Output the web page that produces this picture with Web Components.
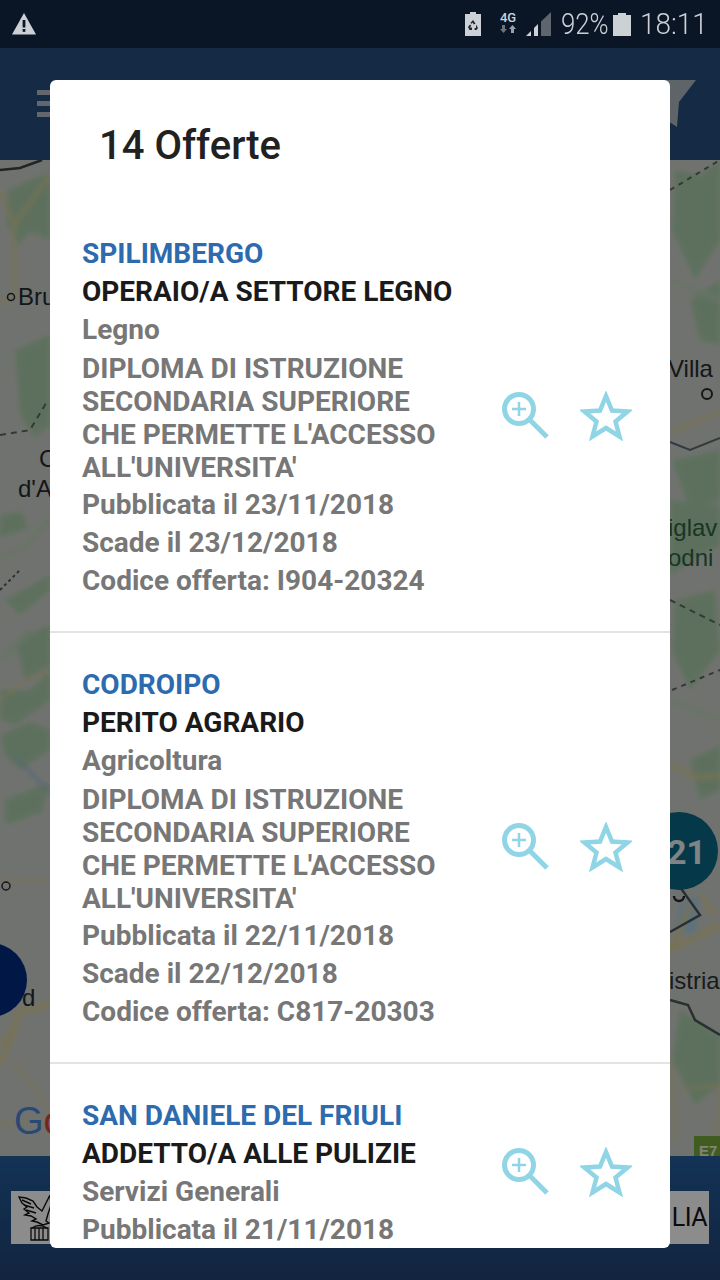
<!DOCTYPE html>
<html>
<head>
<meta charset="utf-8">
<title>Offerte</title>
<style>
    html, body { margin: 0; padding: 0; background: #12263f; }
</style>
</head>
<body>
<app-page>
    <status-bar slot="status"></status-bar>
    <app-header></app-header>
    <map-view></map-view>
    <app-footer></app-footer>
    <offer-dialog slot="dialog" heading="14 Offerte">
        <offer-row>
            <span slot="city">SPILIMBERGO</span>
            <span slot="title">OPERAIO/A SETTORE LEGNO</span>
            <span slot="sector">Legno</span>
            <span slot="education">DIPLOMA DI ISTRUZIONE SECONDARIA SUPERIORE CHE PERMETTE L'ACCESSO ALL'UNIVERSITA'</span>
            <span slot="info">Pubblicata il 23/11/2018</span>
            <span slot="info">Scade il 23/12/2018</span>
            <span slot="info">Codice offerta: I904-20324</span>
        </offer-row>
        <offer-row>
            <span slot="city">CODROIPO</span>
            <span slot="title">PERITO AGRARIO</span>
            <span slot="sector">Agricoltura</span>
            <span slot="education">DIPLOMA DI ISTRUZIONE SECONDARIA SUPERIORE CHE PERMETTE L'ACCESSO ALL'UNIVERSITA'</span>
            <span slot="info">Pubblicata il 22/11/2018</span>
            <span slot="info">Scade il 22/12/2018</span>
            <span slot="info">Codice offerta: C817-20303</span>
        </offer-row>
        <!-- the rest of this row is scrolled out of the dialog -->
        <offer-row style="padding-bottom: 107px">
            <span slot="city">SAN DANIELE DEL FRIULI</span>
            <span slot="title">ADDETTO/A ALLE PULIZIE</span>
            <span slot="sector">Servizi Generali</span>
            <span slot="info">Pubblicata il 21/11/2018</span>
        </offer-row>
    </offer-dialog>
</app-page>

<script>
class AppPage extends HTMLElement {
    connectedCallback() {
        this.attachShadow({ mode: 'open' });
        this.shadowRoot.innerHTML = `
        <style>
            :host { display: flex; flex-direction: column; width: 720px; height: 1280px; overflow: hidden; font-family: Roboto, sans-serif; }
            .main { position: relative; flex: 1; display: flex; flex-direction: column; min-height: 0; }
            .scrim { position: absolute; inset: 0; background: rgba(0, 0, 0, .45); display: flex; padding: 32px 50px; box-sizing: border-box; }
        </style>
        <slot name="status"></slot>
        <div class="main">
            <slot></slot>
            <div class="scrim"><slot name="dialog"></slot></div>
        </div>
        `;
    }
}

class StatusBar extends HTMLElement {
    connectedCallback() {
        this.attachShadow({ mode: 'open' });
        this.shadowRoot.innerHTML = `
        <style>
            :host { display: flex; align-items: center; height: 48px; padding: 0 15px 0 12px; background: #0a1626; color: #ccd1d6; font-family: Roboto, sans-serif; font-weight: 300; flex: none; box-sizing: border-box; }
            svg { display: block; flex: none; }
            .spacer { flex: 1; }
            .net { width: 20px; margin-left: 17px; font-size: 13px; line-height: 13px; font-weight: 500; text-align: center; position: relative; top: -2px; }
            .net svg { margin: 1px auto 0; }
            .signal { margin-left: 8px; }
            .pct, .clock { display: block; font-size: 30px; line-height: 48px; transform-origin: left center; white-space: nowrap; }
            .pct { width: 47px; margin-left: 10px; transform: scaleX(.86); }
            .clock { width: 65px; margin-left: 9px; transform: scaleX(.93); }
            .batt { margin-left: 5px; }
        </style>
        <svg width="24" height="22" viewBox="0 0 24 22"><path d="M12 0 24 21.5H0Z" fill="#ccd1d6"/><rect x="10.6" y="7" width="2.8" height="7.5" fill="#0a1626"/><rect x="10.6" y="16" width="2.8" height="2.8" fill="#0a1626"/></svg>
        <div class="spacer"></div>
        <svg width="16" height="24" viewBox="0 0 16 24"><path d="M5 0h6v2h5v22H0V2h5Z" fill="#ccd1d6"/><path d="M8 8 10.5 11.5 8.8 12.5 7.6 10.5 6.8 11.8 5.4 11ZM11 12.5 13 16 11.5 18H9.6V16H11ZM3 15 5 12.5 6.3 13.4 5 15.6H7V18H4.5Z" fill="#20262c"/></svg>
        <div class="net">4G
            <svg width="16" height="8" viewBox="0 0 16 8"><path d="M2 0h3v4h2L3.500 8 0 4h2Z" fill="#6c7279"/><path d="M12.500 0 16 4h-2v4h-3V4H9Z" fill="#9aa0a6"/></svg>
        </div>
        <svg class="signal" width="25" height="24" viewBox="0 0 25 24"><path d="M0 24 5 19V24Z" fill="#ccd1d6"/><path d="M8 24V16L12 12V24Z" fill="#ccd1d6"/><path d="M15 24V9.500L25 0V24Z" fill="#5e656d"/></svg>
        <span class="pct">92%</span>
        <svg class="batt" width="18" height="23" viewBox="0 0 18 23"><path d="M5 0h8v2h5v21H0V2h5Z" fill="#ccd1d6"/></svg>
        <span class="clock">18:11</span>
        `;
    }
}

class AppHeader extends HTMLElement {
    connectedCallback() {
        this.attachShadow({ mode: 'open' });
        this.shadowRoot.innerHTML = `
        <style>
            :host { display: flex; align-items: flex-start; justify-content: space-between; height: 112px; padding: 32px 24px 0 37px; background: #264d7e; flex: none; box-sizing: border-box; }
            .menu { display: flex; flex-direction: column; gap: 6px; width: 26px; padding-top: 10px; }
            .menu i { display: block; height: 5px; background: #b2bcc6; }
            svg { display: block; }
        </style>
        <div class="menu"><i></i><i></i><i></i></div>
        <svg width="46" height="47" viewBox="0 0 46 47"><path d="M0 0H46L29 22 27 47 18 41V22Z" fill="#aeb6bf"/></svg>
        `;
    }
}

class MapView extends HTMLElement {
    connectedCallback() {
        this.attachShadow({ mode: 'open' });
        this.shadowRoot.innerHTML = `
        <style>
            :host { display: block; flex: 1; min-height: 0; background: #cdd0ca; overflow: hidden; }
            svg { display: block; }
            text { font-family: "Liberation Sans", sans-serif; }
        </style>
        <svg width="720" height="996" viewBox="0 160 720 996">
            <defs><filter id="soft"><feGaussianBlur stdDeviation="2.4"/></filter></defs>
            <g filter="url(#soft)">
                <g fill="#aacdaa">
                    <path d="M8 190 30 180 50 172V240L30 232 18 245 6 222Z"/>
                    <path d="M15 350 50 335V425L35 438 20 415Z"/>
                    <path d="M0 515 22 512 28 528 0 538Z"/>
                    <path d="M5 600 50 575V590L20 615Z"/>
                    <path d="M15 640 50 625V665L25 680Z"/>
                    <path d="M0 690 30 690 50 670V700L15 725 0 720Z"/>
                    <path d="M0 735 30 722 50 730V750L20 770 5 755Z"/>
                    <path d="M5 800 50 782 42 812 5 825Z"/>
                    <path d="M675 170 700 175 720 160V240L695 280 672 230Z"/>
                    <path d="M690 300 720 280V345L700 340Z"/>
                    <path d="M672 460 720 450V500L690 510Z"/>
                    <path d="M670 500 720 505V545L670 575Z"/>
                    <path d="M675 600 715 590 720 650 690 690 672 650Z"/>
                    <path d="M690 760 720 745V790L700 800Z"/>
                    <path d="M680 1010 720 1035V1085L695 1105 672 1060Z"/>
                </g>
                <g fill="none" stroke="#bcd4b8" stroke-width="5">
                    <path d="M0 560 25 545 50 520"/>
                    <path d="M0 660 30 630"/>
                    <path d="M670 280 720 300"/>
                    <path d="M670 700 720 720"/>
                </g>
                <path d="M680 905 700 895 695 935 675 930Z" fill="#a9cfe0"/>
                <g fill="none" stroke="#dbcf95" stroke-width="3">
                    <path d="M0 190 14 225 50 175"/>
                    <path d="M14 225 15 296 0 302"/>
                    <path d="M0 700 25 680 50 672" stroke-width="2"/>
                    <path d="M0 882 50 880" stroke-width="2"/>
                    <path d="M0 1065 12 1035 18 1012 50 1005" stroke-width="5"/>
                    <path d="M0 1045 15 1030" stroke-width="4"/>
                    <path d="M12 1060 50 1110" stroke-width="2"/>
                    <path d="M0 1125 50 1120" stroke-width="2"/>
                    <path d="M670 432 720 412"/>
                    <path d="M670 765 700 778 720 775" stroke-width="4"/>
                    <path d="M690 905 680 930 670 950 700 935 720 925" stroke-width="5"/>
                    <path d="M700 895 715 915" stroke-width="4"/>
                    <path d="M680 1090 720 1085 715 1140" stroke-width="2"/>
                    <path d="M672 1060 676 1140" stroke-width="2"/>
                </g>
                <path d="M15 757 50 792" stroke="#9dbbd9" stroke-width="2.500" fill="none"/>
            </g>
            <g fill="none" stroke-width="2">
                <path d="M670 442 690 450 720 438" stroke="#5c6a70"/>
                <path d="M670 1000 688 1005 695 1020 720 1035" stroke="#4c565c" stroke-width="2.500"/>
                <path d="M675 880 700 915 670 932" stroke="#4c565c" stroke-width="2.500"/>
                <path d="M0 170 20 168 42 160" stroke="#3d4347" stroke-width="2.500"/>
                <path d="M0 435 30 430 48 400" stroke-dasharray="6 5" stroke="#5d6a62"/>
                <path d="M670 600 720 625" stroke-dasharray="6 5" stroke="#5d6a62"/>
                <path d="M672 690 720 670" stroke-dasharray="5 5" stroke="#5d6a62"/>
                <path d="M670 190 720 160" stroke-dasharray="5 5" stroke="#5d6a62"/>
                <path d="M0 590 20 570" stroke-dasharray="3 3" stroke="#4f5a56"/>
            </g>
            <g fill="#262a2f" font-size="24">
                <circle cx="11" cy="297" r="3.500" fill="none" stroke="#262a2f" stroke-width="1.500"/>
                <text x="18" y="305">Bru</text>
                <text x="39" y="467">C</text>
                <text x="18" y="497">d'A</text>
                <text x="668" y="377">Villa</text>
                <circle cx="707" cy="394" r="5" fill="none" stroke="#262a2f" stroke-width="2"/>
                <circle cx="6" cy="886" r="4" fill="none" stroke="#262a2f" stroke-width="1.500"/>
                <text x="22" y="1006">d</text>
                <text x="668" y="536" fill="#2f6140">iglav</text>
                <text x="668" y="566" fill="#2f6140">odni</text>
                <text x="669" y="989" fill="#2f3338">istria</text>
            </g>
            <circle cx="-10" cy="980" r="37" fill="#022a80"/>
            <circle cx="679" cy="851" r="39" fill="#0a6685"/>
            <text x="667" y="864" font-size="34" font-weight="700" fill="#e8f0f4" style="font-family:Roboto,sans-serif">21</text>
            <path d="M674 896a5 5 0 0 0 10 0" fill="none" stroke="#262a2f" stroke-width="2.500"/>
            <text x="14" y="1134" font-size="38"><tspan fill="#4d84d8">G</tspan><tspan fill="#d9443a">o</tspan></text>
            <rect x="694" y="1136" width="26" height="20" fill="#76a83d"/>
            <text x="699" y="1156" font-size="15" font-weight="700" fill="#e8f0d8">E7</text>
        </svg>
        `;
    }
}

class AppFooter extends HTMLElement {
    connectedCallback() {
        this.attachShadow({ mode: 'open' });
        this.shadowRoot.innerHTML = `
        <style>
            :host { display: block; height: 124px; padding: 35px 11px 0; background: linear-gradient(#235c9c, #214373); flex: none; box-sizing: border-box; }
            .banner { display: flex; align-items: center; justify-content: space-between; height: 53px; padding: 0 2px 0 7px; background: #fff; color: #101418; }
            .name { font: 400 25px "Roboto", sans-serif; letter-spacing: -.5px; }
            svg { display: block; }
        </style>
        <div class="banner">
            <svg width="36" height="46" viewBox="0 0 36 46" fill="none" stroke="#111" stroke-width="1.400">
                <path d="M1 2 8 3 15 6 19 12 24 16 27 10 32 0 33 10 30 19 28 26 31 28 25 30 19 27 14 26 18 24 13 21 7 20 11 18 6 14 9 12 4 8Z"/>
                <path d="M4 5 13 9M6 10 16 13M8 15 18 18"/>
                <path d="M13 33H30V45H13ZM17 33V45M21 33V45M25 33V45" stroke-width="1.300"/>
                <path d="M14 33Q21 28 29 33" stroke-width="1.300"/>
            </svg>
            <span class="name">LIA</span>
        </div>
        `;
    }
}

class OfferDialog extends HTMLElement {
    get heading() {
        return this.getAttribute('heading');
    }

    set heading(val) {
        this.setAttribute('heading', val)
    }

    connectedCallback() {
        this.attachShadow({ mode: 'open' });
        this.shadowRoot.innerHTML = `
        <style>
            :host { display: flex; flex-direction: column; width: 620px; height: 1168px; background: #fff; border-radius: 6px; overflow: hidden; font-family: Roboto, sans-serif; }
            h2 { flex: none; height: 122px; margin: 0; padding: 43px 0 0 49px; box-sizing: border-box; font-size: 40px; line-height: 45px; font-weight: 500; color: #212121; }
        </style>
        <h2></h2>
        <slot></slot>
        `;
        this.shadowRoot.querySelector('h2').textContent = this.heading;
    }
}

class OfferRow extends HTMLElement {
    connectedCallback() {
        this.attachShadow({ mode: 'open' });
        this.shadowRoot.innerHTML = `
        <style>
            :host { display: flex; align-items: center; flex: none; padding: 33px 38px 31px 32px; border-bottom: 2px solid #e3e3e3; font-size: 28px; line-height: 38px; font-weight: 700; color: #777; }
            :host(:last-child) { border-bottom: 0; }
            .text { flex: 1; min-width: 0; padding-right: 38px; }
            ::slotted([slot="city"]) { display: block; color: #2d6bae; }
            ::slotted([slot="title"]) { display: block; color: #1a1a1a; }
            ::slotted([slot="sector"]) { display: block; }
            ::slotted([slot="education"]) { display: block; line-height: 33px; margin: 3px 0 2px; }
            ::slotted([slot="info"]) { display: block; }
            .actions { flex: none; display: flex; align-items: center; gap: 30px; margin-bottom: 3px; }
            svg { display: block; }
        </style>
        <div class="text">
            <slot name="city"></slot>
            <slot name="title"></slot>
            <slot name="sector"></slot>
            <slot name="education"></slot>
            <slot name="info"></slot>
        </div>
        <div class="actions">
            <svg width="48" height="48" viewBox="0 0 48 48" fill="none" stroke="#90d5e6">
                <circle cx="17" cy="17" r="14.500" stroke-width="5"/>
                <path d="M17 10V24M10 17H24" stroke-width="2.500"/>
                <path d="M27.500 27.500 45 45" stroke-width="5"/>
            </svg>
            <svg width="52" height="50" viewBox="0 0 52 50" fill="none" stroke="#90d5e6">
                <path d="M26 5 32 19.500 47.500 20.500 35.500 30.500 39.500 45.500 26 37 12.500 45.500 16.500 30.500 4.500 20.500 20 19.500Z" stroke-width="4.500"/>
            </svg>
        </div>
        `;
    }
}

window.customElements.define('app-page', AppPage);
window.customElements.define('status-bar', StatusBar);
window.customElements.define('app-header', AppHeader);
window.customElements.define('map-view', MapView);
window.customElements.define('app-footer', AppFooter);
window.customElements.define('offer-dialog', OfferDialog);
window.customElements.define('offer-row', OfferRow);
</script>
</body>
</html>
